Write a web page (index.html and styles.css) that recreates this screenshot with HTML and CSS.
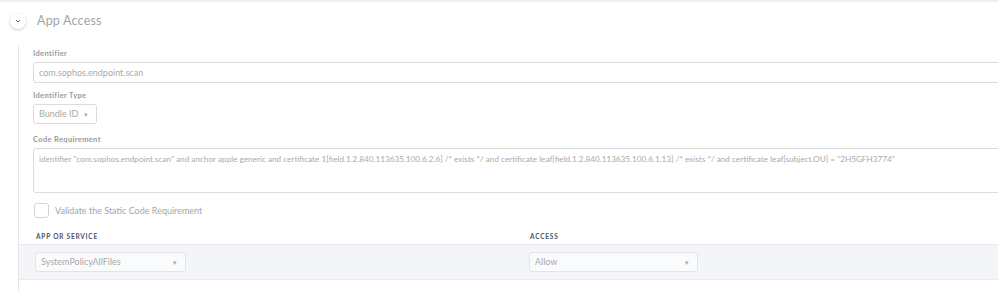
FILE: index.html
```html
<!DOCTYPE html>
<html>
<head>
  <meta charset="utf-8">
  <title>App Access</title>
  <link rel="stylesheet" href="styles.css">
</head>
<body>

<div class="topline"></div>

<div class="header">
  <button class="toggle">
    <svg width="8" height="6" viewBox="0 0 8 6"><path d="M2 2 L4 4 L6 2" fill="none" stroke="#6a6a6a" stroke-width="1"/></svg>
  </button>
  <span class="title">App Access</span>
</div>

<div class="panel">
  <div class="field">
    <label>Identifier</label>
    <div class="input wide">com.sophos.endpoint.scan</div>
  </div>

  <div class="field">
    <label>Identifier Type</label>
    <div class="input select small">Bundle ID <span class="caret">&#9662;</span></div>
  </div>

  <div class="field">
    <label>Code Requirement</label>
    <div class="input wide area">identifier "com.sophos.endpoint.scan" and anchor apple generic and certificate 1[field.1.2.840.113635.100.6.2.6] /* exists */ and certificate leaf[field.1.2.840.113635.100.6.1.13] /* exists */ and certificate leaf[subject.OU] = "2H5GFH3774"</div>
  </div>

  <div class="check">
    <span class="box"></span>
    <span>Validate the Static Code Requirement</span>
  </div>

  <div class="cols heads">
    <div>APP OR SERVICE</div>
    <div>ACCESS</div>
  </div>
  <div class="cols band">
    <div><div class="input select svc">SystemPolicyAllFiles <span class="caret">&#9662;</span></div></div>
    <div><div class="input select acc">Allow <span class="caret">&#9662;</span></div></div>
  </div>
</div>

</body>
</html>
```

FILE: styles.css
```css
body { margin:0; background:#fff; font-family:Lato, "Open Sans", sans-serif; color:#999; overflow:hidden; }
.topline { height:2px; background:#eef0f3; }

.header { display:flex; align-items:center; padding-left:10px; margin-top:11px; height:16px; }
.toggle { width:16px; height:16px; border-radius:50%; border:none; background:#fff; box-shadow:0 1px 3px rgba(0,0,0,0.2); padding:0; display:flex; align-items:center; justify-content:center; }
.title { margin-left:11px; font-size:12.5px; color:#a4a4a4; margin-top:-2px; letter-spacing:0.2px; }

.panel { margin:17px 0 0 18px; border-left:1px solid #e6e6e6; padding:3px 0 11px 14px; }

.field { margin-bottom:8px; }
.field label { display:block; font-size:7.5px; font-weight:700; color:#999; letter-spacing:0.35px; line-height:10px; margin-bottom:3px; }

.input { box-sizing:border-box; border:1px solid #dcdcdc; border-radius:3px; background:#fff; font-size:9px; color:#aaa; height:21px; line-height:19px; padding:0 5px; }
.wide { width:calc(100% + 20px); }
.area { height:45px; line-height:19px; white-space:nowrap; overflow:hidden; font-size:8.2px; padding-top:1px; }
.select { display:flex; justify-content:space-between; align-items:center; height:20px; line-height:18px; }
.small { width:64px; }
.caret { font-size:7px; color:#aaa; padding-right:3px; }

.field:nth-child(2) { margin-bottom:11px; }
.field:nth-child(3) { margin-bottom:9px; }

.check { display:flex; align-items:center; font-size:9px; color:#a6a6a6; height:16px; }
.check .box { box-sizing:border-box; width:15px; height:15px; border:1px solid #d4d4d4; border-radius:3px; margin:0 6px 0 1px; background:#fff; }

.cols { display:grid; grid-template-columns:494px 1fr; }
.heads { margin-top:14px; padding-left:3px; font-size:6.5px; font-weight:700; letter-spacing:0.8px; color:#4a5468; line-height:9px; height:10px; }
.band { margin:2px 0 0 -14px; padding:7px 0 7px 16px; background:#f4f5f8; border-top:1px solid #e8ebf0; border-bottom:1px solid #e8ebf0; }
.band .input { background:#fafbfc; border-color:#e2e4e8; }
.svc { width:151px; }
.acc { width:169px; }
```
